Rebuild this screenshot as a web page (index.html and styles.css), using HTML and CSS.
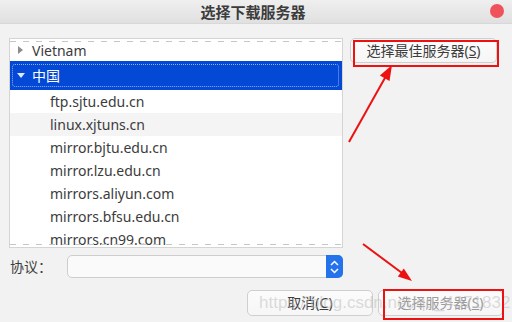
FILE: index.html
```html
<!DOCTYPE html>
<html lang="zh-CN">
<head>
<meta charset="UTF-8" />
<title>选择下载服务器</title>
<link rel="stylesheet" href="styles.css">
</head>
<body>

<div class="titlebar">
  <span class="title">选择下载服务器</span>
  <span class="close"></span>
</div>

<div class="content">
  <div class="top">
    <div class="tree">
      <div class="row parent"><span class="exp"><i class="tri-right"></i></span>Vietnam</div>
      <div class="row parent selected"><span class="exp"><i class="tri-down"></i></span>中国</div>
      <div class="row">ftp.sjtu.edu.cn</div>
      <div class="row hover">linux.xjtuns.cn</div>
      <div class="row">mirror.bjtu.edu.cn</div>
      <div class="row">mirror.lzu.edu.cn</div>
      <div class="row">mirrors.aliyun.com</div>
      <div class="row">mirrors.bfsu.edu.cn</div>
      <div class="row">mirrors.cn99.com</div>
    </div>
    <div class="side">
      <button class="btn best">选择最佳服务器(<u>S</u>)</button>
    </div>
  </div>

  <div class="proto">
    <label>协议：</label>
    <div class="combo">
      <span class="spin">
        <svg width="17" height="22" viewBox="0 0 17 22">
          <!-- up / down chevrons -->
          <path d="M5 9 L8.5 5.5 L12 9" fill="none" stroke="#fff" stroke-width="1.5"/>
          <path d="M5 13 L8.5 16.5 L12 13" fill="none" stroke="#fff" stroke-width="1.5"/>
        </svg>
      </span>
    </div>
  </div>

  <div class="actions">
    <button class="btn cancel">取消(<u>C</u>)</button>
    <button class="btn choose" disabled>选择服务器(<u>S</u>)</button>
  </div>
</div>

<div class="watermark">https://blog.csdn.net/qq_4371832</div>

<!-- annotation layer: red boxes and arrows -->
<svg class="marks" width="512" height="322">
  <rect x="354" y="41" width="144" height="25" fill="none" stroke="#ee1111" stroke-width="2"/>
  <rect x="384" y="290" width="119" height="29" fill="none" stroke="#ee1111" stroke-width="2"/>
  <line x1="349" y1="142" x2="386" y2="76" stroke="#ee1111" stroke-width="2"/>
  <polygon points="392,65 389.5,81 379.9,75.4" fill="#ee1111"/>
  <line x1="363" y1="244" x2="402" y2="273" stroke="#ee1111" stroke-width="2"/>
  <polygon points="412,281 397.8,276.6 403.8,268.6" fill="#ee1111"/>
</svg>

</body>
</html>
```

FILE: styles.css
```css
* {
  box-sizing: border-box;
}

body {
  margin: 0;
  width: 512px;
  height: 322px;
  overflow: hidden;
  position: relative;
  background: #f2f2f2;
  color: #3c3c3c;
  font-family: "Noto Sans", "Noto Sans CJK SC", sans-serif;
  font-size: 14px;
}

.titlebar {
  height: 24px;
  background: linear-gradient(#efefef, #e0e0e0);
  border-bottom: 1px solid #d8d8d8;
  display: flex;
  align-items: center;
  justify-content: center;
  position: relative;
}

.title {
  font-weight: bold;
  font-size: 15px;
  line-height: 18px;
  margin-right: 6px;
}

.close {
  position: absolute;
  right: 8px;
  top: 4px;
  width: 14px;
  height: 14px;
  border-radius: 50%;
  background: #f0525b;
}

.content {
  padding: 14px 9px 0 9px;
}

.top {
  display: flex;
  gap: 7px;
}

.tree {
  width: 334px;
  height: 210px;
  background: #fff;
  border: 1px solid #d4d4d4;
  overflow: hidden;
  position: relative;
}

.tree::before,
.tree::after {
  content: "";
  position: absolute;
  left: 0;
  right: 0;
  height: 1px;
  background: repeating-linear-gradient(90deg, #c6c6c6 0 6px, transparent 6px 13px);
  z-index: 2;
}

.tree::before {
  top: 2px;
}

.tree::after {
  bottom: 2px;
}

.row {
  height: 23px;
  line-height: 23px;
  padding-left: 40px;
  white-space: nowrap;
  position: relative;
}

.row.parent {
  padding-left: 3px;
  display: flex;
  align-items: center;
  gap: 5px;
}

.row.parent:first-child {
  height: 22px;
}

.row.hover {
  background: #f4f4f4;
}

.row.selected {
  height: 29px;
  background: #0349d6;
  color: #fff;
}

.row.selected::after {
  content: "";
  position: absolute;
  left: 2px;
  right: 3px;
  top: 3px;
  bottom: 3px;
  border: 1px dotted #8fb0f0;
  border-radius: 3px;
}

.exp {
  width: 14px;
  display: flex;
  justify-content: center;
}

.tri-right {
  width: 0;
  height: 0;
  border-left: 5px solid #8c8c8c;
  border-top: 4.5px solid transparent;
  border-bottom: 4.5px solid transparent;
}

.tri-down {
  width: 0;
  height: 0;
  border-top: 5px solid #dfe8ff;
  border-left: 4.5px solid transparent;
  border-right: 4.5px solid transparent;
  margin-left: 1px;
}

.side {
  flex: 1;
}

.btn {
  font-family: inherit;
  font-size: 14px;
  color: #3c3c3c;
  background: linear-gradient(#fcfcfc, #f6f6f6);
  border: 1px solid #cfcfcf;
  border-radius: 5px;
  padding: 0;
  line-height: 18px;
}

.btn u {
  text-decoration-thickness: 1px;
}

.best {
  width: 147px;
  height: 25px;
}

.proto {
  display: flex;
  align-items: center;
  margin-top: 7px;
}

.proto label {
  width: 58px;
  padding-left: 1px;
  line-height: 18px;
}

.combo {
  width: 276px;
  height: 23px;
  background: #fafafa;
  border: 1px solid #cdcdcd;
  border-radius: 5px;
  display: flex;
  justify-content: flex-end;
}

.spin {
  width: 17px;
  margin: -1px -1px -1px 0;
  background: #2473ea;
  border-radius: 0 5px 5px 0;
  display: flex;
  align-items: center;
}

.actions {
  display: flex;
  justify-content: flex-end;
  gap: 5px;
  margin-top: 12px;
}

.cancel {
  width: 126px;
  height: 26px;
}

.choose {
  width: 125px;
  height: 26px;
  color: #9a9a9a;
}

.watermark {
  position: absolute;
  left: 259px;
  top: 293px;
  font-family: "Liberation Sans", Arial, sans-serif;
  font-size: 17px;
  color: rgba(190, 190, 190, 0.55);
  white-space: nowrap;
  pointer-events: none;
}

.marks {
  position: absolute;
  left: 0;
  top: 0;
  pointer-events: none;
}
```
